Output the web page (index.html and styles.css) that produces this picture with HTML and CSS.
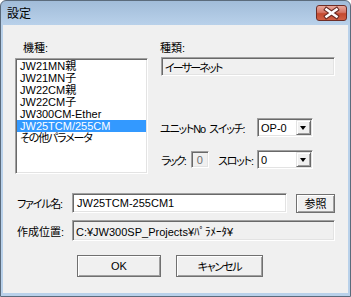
FILE: index.html
```html
<!DOCTYPE html>
<html lang="ja">
<head>
  <meta charset="UTF-8">
  <title>設定</title>
  <link rel="stylesheet" href="styles.css">
</head>
<body>
  <div class="window">
    <div class="titlebar">
      <span class="title">設定</span>
      <button class="close">
        <svg width="29" height="14" viewBox="0 0 29 14">
          <path d="M9.5 3.5 L19.5 10.5 M19.5 3.5 L9.5 10.5" stroke="#6a2a22" stroke-width="4.6" stroke-linecap="square"/>
          <path d="M9.5 3.5 L19.5 10.5 M19.5 3.5 L9.5 10.5" stroke="#fff" stroke-width="2.6" stroke-linecap="square"/>
        </svg>
      </button>
    </div>

    <div class="client">
      <div class="top">
        <div class="model-col">
          <div class="label model-label">機種:</div>
          <ul class="listbox">
            <li>JW21MN親</li>
            <li>JW21MN子</li>
            <li>JW22CM親</li>
            <li>JW22CM子</li>
            <li>JW300CM-Ether</li>
            <li class="selected">JW25TCM/255CM</li>
            <li class="kana">その他パラメータ</li>
          </ul>
        </div>

        <div class="kind-col">
          <div class="label kind-label">種類:</div>
          <div class="field readonly kind-field"><span class="kana-tight">イーサーネット</span></div>

          <div class="unit-grid">
            <span class="kana">ユニットNo</span>
            <span class="kana">スイッチ:</span>
            <div class="combo"><span>OP-0</span><span class="arrow"></span></div>

            <span class="rack"><span class="kana-tight">ラック:</span><span class="field disabled rack-box">0</span></span>
            <span class="slot-label kana">スロット:</span>
            <div class="combo"><span>0</span><span class="arrow"></span></div>
          </div>
        </div>
      </div>

      <div class="row file-row">
        <span class="row-label kana">ファイル名:</span>
        <div class="field input file-field">JW25TCM-255CM1</div>
        <button class="btn browse">参照</button>
      </div>

      <div class="row path-row">
        <span class="row-label">作成位置:</span>
        <div class="field readonly path-field">C:¥JW300SP_Projects¥ﾊﾟﾗﾒｰﾀ¥</div>
      </div>

      <div class="actions">
        <button class="btn ok">OK</button>
        <button class="btn cancel kana">キャンセル</button>
      </div>
    </div>
  </div>
</body>
</html>
```

FILE: styles.css
```css
* {
  box-sizing: border-box;
}

body {
  margin: 0;
  font-family: "Liberation Sans", "Noto Sans CJK JP", sans-serif;
  font-size: 11px;
  font-feature-settings: "palt";
  color: #000;
  background: #fff;
}

/* kana in the old ui font is much narrower than in Noto */
.kana {
  letter-spacing: -1.2px;
}

.kana-tight {
  letter-spacing: -1.8px;
}

.window {
  width: 351px;
  height: 297px;
  border: 1px solid #5b6b7c;
  border-radius: 6px 6px 0 0;
  background: linear-gradient(#a1bcd9, #b9d1ea 24px, #b9d1ea);
  display: flex;
  flex-direction: column;
}

.titlebar {
  height: 24px;
  display: flex;
  align-items: center;
  padding: 0 3px 0 6px;
}

.title {
  font-size: 12px;
  margin-top: -1px;
}

.close {
  margin-left: auto;
  align-self: flex-start;
  margin-top: 4px;
  width: 31px;
  height: 16px;
  padding: 0;
  border: 1px solid #6e2d26;
  border-radius: 3px;
  background: linear-gradient(#e9a89c, #d67767 45%, #c4492f 55%, #d06045);
  display: flex;
  align-items: center;
  justify-content: center;
}

.client {
  flex: 1;
  margin: 0 2px 3px 2px;
  background: #f0f0f0;
  padding: 15px 0 0 12px;
}

.top {
  display: flex;
  gap: 12px;
}

.model-col {
  width: 133px;
}

.label {
  line-height: 16px;
}

.model-label {
  height: 18px;
  padding-left: 8px;
}

.kind-label {
  height: 17px;
}

/* sunken 3d border used by list, edits and combos */
.listbox,
.field,
.combo {
  border: 1px solid;
  border-color: #a0a0a0 #fff #fff #a0a0a0;
  box-shadow: inset 1px 1px #696969, inset -1px -1px #e3e3e3;
}

.listbox {
  list-style: none;
  margin: 0;
  padding: 1px;
  width: 133px;
  height: 116px;
  background: #fff;
}

.listbox li {
  height: 12px;
  line-height: 12px;
  padding-left: 3px;
  white-space: nowrap;
}

.listbox li.selected {
  background: #3399ff;
  color: #fff;
}

.field {
  display: flex;
  align-items: center;
  padding-left: 3px;
  white-space: nowrap;
}

.readonly {
  background: #f0f0f0;
}

.input {
  background: #fff;
}

.disabled {
  background: #f0f0f0;
  color: #6d6d6d;
}

.kind-field {
  margin-left: 1px;
  width: 174px;
  height: 19px;
}

.unit-grid {
  display: grid;
  grid-template-columns: 49px 48px 56px;
  align-items: center;
  row-gap: 13px;
  margin-top: 42px;
  white-space: nowrap;
}

.rack {
  display: flex;
  align-items: center;
  gap: 6px;
  padding-left: 1px;
}

.rack-box {
  width: 18px;
  height: 17px;
  justify-content: center;
  padding-left: 0;
  letter-spacing: 0;
}

.slot-label {
  padding-left: 9px;
}

.combo {
  width: 56px;
  height: 19px;
  background: #fff;
  display: flex;
  align-items: center;
  padding: 2px 1px 2px 3px;
}

.arrow {
  margin-left: auto;
  width: 15px;
  height: 15px;
  background: #f0f0f0;
  border: 1px solid;
  border-color: #e3e3e3 #696969 #696969 #e3e3e3;
  box-shadow: inset 1px 1px #fff, inset -1px -1px #a0a0a0;
  position: relative;
}

.arrow::after {
  content: "";
  position: absolute;
  left: 3px;
  top: 5px;
  border-left: 3.5px solid transparent;
  border-right: 3.5px solid transparent;
  border-top: 4px solid #000;
}

.row {
  display: flex;
  align-items: center;
}

.row-label {
  width: 57px;
  padding-left: 2px;
  white-space: nowrap;
}

.file-row {
  margin-top: 19px;
}

.file-field {
  width: 215px;
  height: 20px;
  padding-left: 4px;
}

.btn {
  font: inherit;
  font-feature-settings: "palt";
  color: #000;
  background: #f0f0f0;
  border: 1px solid #707070;
  box-shadow: inset 1px 1px #fff, inset -1px -1px #a0a0a0;
  padding: 0;
}

.btn.kana {
  letter-spacing: -1.2px;
}

.browse {
  margin-left: 9px;
  width: 39px;
  height: 19px;
}

.path-row {
  margin-top: 7px;
}

.path-field {
  width: 263px;
  height: 21px;
}

.actions {
  display: flex;
  gap: 15px;
  margin-top: 14px;
  padding-left: 62px;
}

.ok {
  width: 84px;
  height: 22px;
}

.cancel {
  width: 87px;
  height: 22px;
}
```
